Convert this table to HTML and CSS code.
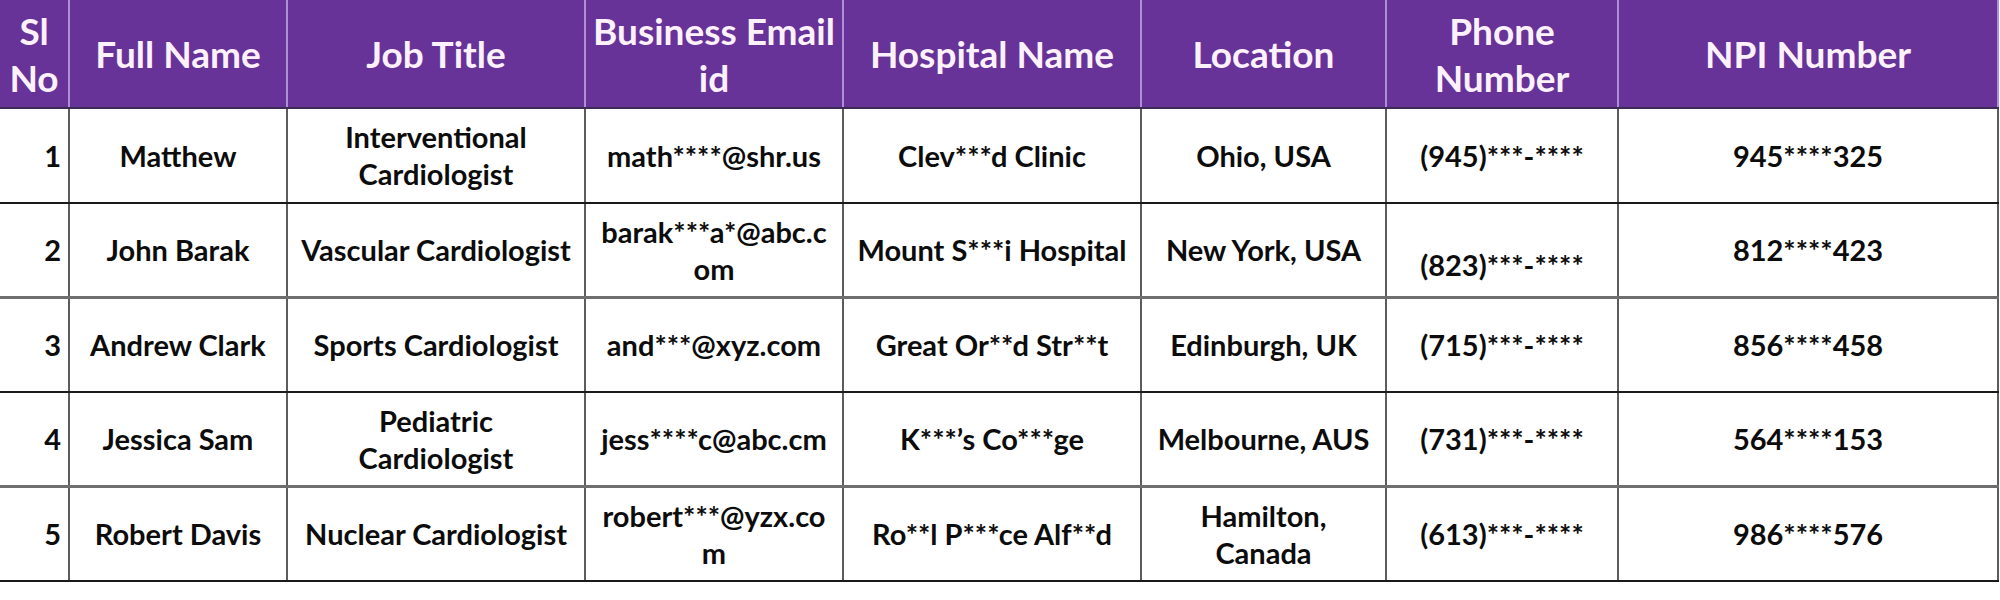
FILE: index.html
```html
<!DOCTYPE html>
<html lang="en">
<head>
<meta charset="utf-8">
<title>Cardiologists</title>
<link rel="stylesheet" href="styles.css">
</head>
<body>
<table class="grid">
  <colgroup>
    <col class="c-sl"><col class="c-name"><col class="c-job"><col class="c-mail"><col class="c-hosp"><col class="c-loc"><col class="c-phone"><col class="c-npi">
  </colgroup>
  <thead>
    <tr class="head">
      <th>Sl No</th>
      <th>Full Name</th>
      <th>Job Title</th>
      <th>Business Email id</th>
      <th>Hospital Name</th>
      <th>Location</th>
      <th>Phone Number</th>
      <th>NPI Number</th>
    </tr>
  </thead>
  <tbody>
    <tr class="row">
      <td class="num">1</td>
      <td>Matthew</td>
      <td>Interventional<br>Cardiologist</td>
      <td class="mail">math****@shr.us</td>
      <td>Clev***d Clinic</td>
      <td>Ohio, USA</td>
      <td>(945)***-****</td>
      <td>945****325</td>
    </tr>
    <tr class="row">
      <td class="num">2</td>
      <td>John Barak</td>
      <td>Vascular Cardiologist</td>
      <td class="mail">barak***a*@abc.c<br>om</td>
      <td>Mount S***i Hospital</td>
      <td>New York, USA</td>
      <td class="low">(823)***-****</td>
      <td>812****423</td>
    </tr>
    <tr class="row soft">
      <td class="num">3</td>
      <td>Andrew Clark</td>
      <td>Sports Cardiologist</td>
      <td class="mail">and***@xyz.com</td>
      <td>Great Or**d Str**t</td>
      <td>Edinburgh, UK</td>
      <td>(715)***-****</td>
      <td>856****458</td>
    </tr>
    <tr class="row">
      <td class="num">4</td>
      <td>Jessica Sam</td>
      <td>Pediatric<br>Cardiologist</td>
      <td class="mail">jess****c@abc.cm</td>
      <td>K***’s Co***ge</td>
      <td>Melbourne, AUS</td>
      <td>(731)***-****</td>
      <td>564****153</td>
    </tr>
    <tr class="row soft">
      <td class="num">5</td>
      <td>Robert Davis</td>
      <td>Nuclear Cardiologist</td>
      <td class="mail">robert***@yzx.co<br>m</td>
      <td>Ro**l P***ce Alf**d</td>
      <td>Hamilton,<br>Canada</td>
      <td>(613)***-****</td>
      <td>986****576</td>
    </tr>
  </tbody>
</table>
</body>
</html>
```
FILE: styles.css
```css
html, body {
  margin: 0;
  padding: 0;
  background: #ffffff;
}

.grid {
  width: 1998px;
  border-collapse: collapse;
  table-layout: fixed;
  font-family: "Lato", "Liberation Sans", sans-serif;
  font-weight: 700;
  color: #0c0c0c;
}

.c-sl { width: 69px; }
.c-name { width: 218px; }
.c-job { width: 298px; }
.c-mail { width: 258px; }
.c-hosp { width: 298px; }
.c-loc { width: 245px; }
.c-phone { width: 232px; }
.c-npi { width: 380px; }

.head {
  height: 108px;
  background: #673399;
}

.head th {
  color: #fdf1fb;
  font-size: 37px;
  line-height: 47px;
  font-weight: 700;
  padding: 0 4px;
  text-align: center;
  vertical-align: middle;
  border-left: 2px solid #ad8fd6;
  border-right: 2px solid #ad8fd6;
  border-bottom: 2px solid #3d2a55;
}

.head th:first-child { border-left: none; }

.row {
  height: 94.6px;
}

.row td {
  font-size: 29px;
  line-height: 37px;
  text-align: center;
  vertical-align: middle;
  padding: 0 6px;
  white-space: nowrap;
  border-left: 2px solid #5c5c5c;
  border-right: 2px solid #5c5c5c;
  border-bottom: 2px solid #1a1a1a;
}

.row td:first-child { border-left: none; }

.row.soft td { border-top: 3px solid #6e6e6e; }

.row td.num {
  text-align: right;
  padding-right: 7px;
}

.row td.mail {
  padding: 0 4px;
}

.row td.low {
  padding-top: 30px;
}
```
